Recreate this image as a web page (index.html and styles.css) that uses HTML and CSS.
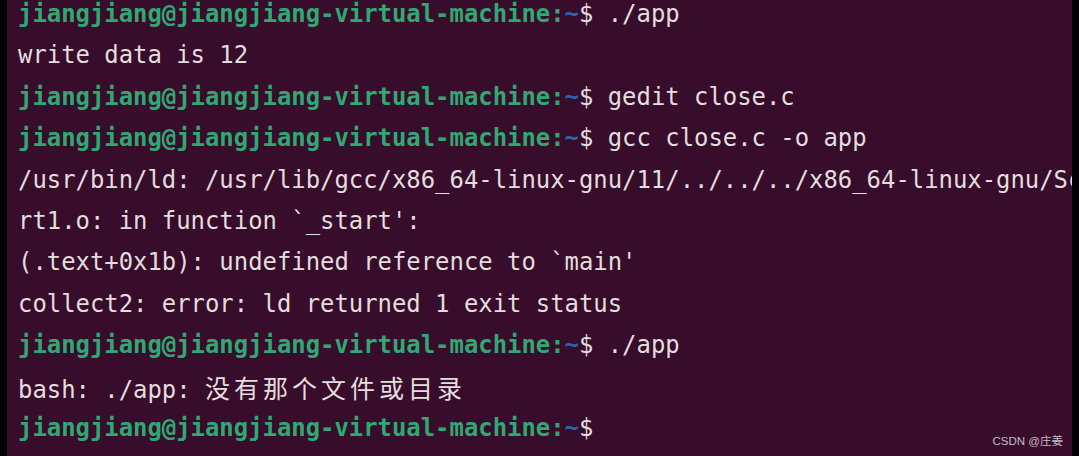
FILE: index.html
```html
<!DOCTYPE html>
<html>
<head>
<meta charset="utf-8">
<link rel="stylesheet" href="styles.css">
</head>
<body>
<div class="frame">
  <div class="edge"></div>
  <div class="term">
    <div class="lines">
      <div class="line"><span class="user">jiangjiang@jiangjiang-virtual-machine</span><span class="user">:</span><span class="path">~</span>$ ./app</div>
      <div class="line">write data is 12</div>
      <div class="line"><span class="user">jiangjiang@jiangjiang-virtual-machine</span><span class="user">:</span><span class="path">~</span>$ gedit close.c</div>
      <div class="line"><span class="user">jiangjiang@jiangjiang-virtual-machine</span><span class="user">:</span><span class="path">~</span>$ gcc close.c -o app</div>
      <div class="line">/usr/bin/ld: /usr/lib/gcc/x86_64-linux-gnu/11/../../../x86_64-linux-gnu/Scrt1.o</div>
      <div class="line">rt1.o: in function `_start':</div>
      <div class="line">(.text+0x1b): undefined reference to `main'</div>
      <div class="line">collect2: error: ld returned 1 exit status</div>
      <div class="line"><span class="user">jiangjiang@jiangjiang-virtual-machine</span><span class="user">:</span><span class="path">~</span>$ ./app</div>
      <div class="line">bash: ./app: <span class="cjk">没有那个文件或目录</span></div>
      <div class="line"><span class="user">jiangjiang@jiangjiang-virtual-machine</span><span class="user">:</span><span class="path">~</span>$</div>
    </div>
    <div class="watermark">CSDN @庄姜</div>
  </div>
  <div class="edge"></div>
</div>
</body>
</html>
```
FILE: styles.css
```css
html, body {
  margin: 0;
  padding: 0;
  background: #000;
  width: 1079px;
  height: 456px;
  overflow: hidden;
}
.frame {
  display: flex;
  height: 456px;
}
.edge {
  width: 7px;
  flex: 0 0 7px;
  background: #050205;
}
.term {
  flex: 1;
  position: relative;
  background: #380c2b;
  overflow: hidden;
}
.lines {
  margin-top: -6px;
  padding-left: 11px;
  font-family: "DejaVu Sans Mono", monospace;
  font-size: 23.9px;
  line-height: 41.4px;
  color: #e2dede;
}
.line {
  white-space: pre;
  height: 41.4px;
}
.user {
  color: #30a874;
  font-weight: bold;
}
.path {
  color: #2f63ad;
  font-weight: bold;
}
.cjk {
  font-family: "Noto Sans CJK SC", sans-serif;
  font-size: 25px;
  letter-spacing: 4px;
}
.watermark {
  position: absolute;
  right: 9px;
  bottom: 8px;
  font-family: "Liberation Sans", "Noto Sans CJK SC", sans-serif;
  font-size: 11.5px;
  color: #c4bcc2;
}
```
